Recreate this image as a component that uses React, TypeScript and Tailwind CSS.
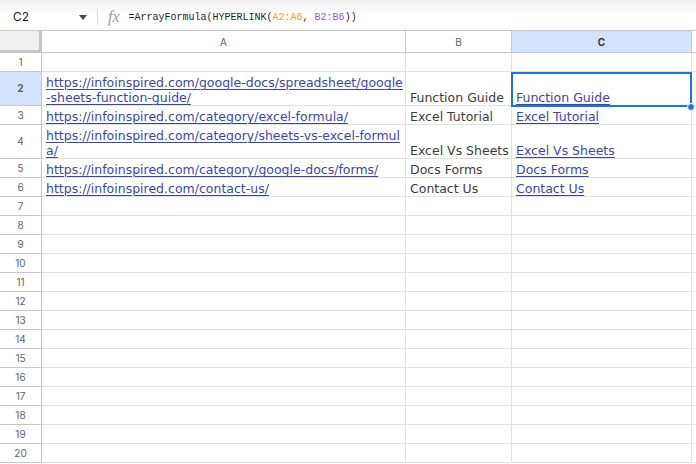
const COLS = ["A", "B", "C"]

const DATA: { url: string[]; label: string }[] = [
  { url: ["https://infoinspired.com/google-docs/spreadsheet/google", "-sheets-function-guide/"], label: "Function Guide" },
  { url: ["https://infoinspired.com/category/excel-formula/"], label: "Excel Tutorial" },
  { url: ["https://infoinspired.com/category/sheets-vs-excel-formul", "a/"], label: "Excel Vs Sheets" },
  { url: ["https://infoinspired.com/category/google-docs/forms/"], label: "Docs Forms" },
  { url: ["https://infoinspired.com/contact-us/"], label: "Contact Us" },
]

const cell = "border-r border-b border-[#e1e1e1] flex items-end px-[4px] leading-[15px] overflow-hidden whitespace-nowrap"
const link = "text-[#3d46a8] underline decoration-[1px] underline-offset-[2px]"
const rowHead = "border-r border-b border-[#c7c7c7] flex items-center justify-center text-[10px] text-[#5f6368]"

function RowHeader({ n, active }: { n: number; active?: boolean }) {
  return (
    <div className={`${rowHead} ${active ? "bg-[#d3e3fd] font-bold text-[#1f1f1f]" : "bg-white"}`} style={{ fontFamily: "Inter, Roboto, sans-serif" }}>
      {n}
    </div>
  )
}

export default function App() {
  return (
    <div className="w-[696px] h-[464px] overflow-hidden bg-white" style={{ fontFamily: '"DejaVu Sans", Verdana, sans-serif' }}>
      {/* Formula bar */}
      <div className="h-[31px] pt-[4px] flex items-center border-b border-[#c7c7c7] bg-gradient-to-b from-[#f0f0f0] via-white to-white">
        <div className="w-[72px] pl-[13px] text-[12px] text-[#1f1f1f]" style={{ fontFamily: "Inter, Roboto, sans-serif" }}>
          C2
        </div>
        <svg width="8" height="5" viewBox="0 0 8 5" className="ml-[7px]">
          <path d="M0 0h8L4 5z" fill="#444746" />
        </svg>
        <div className="ml-[10px] w-px h-[16px] bg-[#dadada]" />
        <span className="ml-[10px] text-[16px] italic text-[#9a9a9a]" style={{ fontFamily: '"Liberation Serif", serif' }}>
          fx
        </span>
        <div className="ml-[9px] text-[10px] text-[#1f1f1f] whitespace-nowrap" style={{ fontFamily: '"Liberation Mono", monospace' }}>
          =ArrayFormula(HYPERLINK(<span className="text-[#f09a2c]">A2:A6</span>, <span className="text-[#a259c9]">B2:B6</span>))
        </div>
      </div>

      {/* Grid */}
      <div className="relative grid grid-cols-[42px_364px_106px_180px_1fr] grid-rows-[22px_19px_34px_19px_34px_19px_19px_repeat(14,19px)] text-[12.5px] text-[#3c3c3c]">
        {/* corner */}
        <div className="bg-[#f1f1f1] border-r-[3px] border-b-[3px] border-[#c4c4c4]" />
        {COLS.map((c) => (
          <div
            key={c}
            className={`border-r border-b border-[#c7c7c7] flex items-center justify-center pt-[2px] text-[10px] ${c === "C" ? "bg-[#d3e3fd] text-[#1f1f1f] font-semibold" : "bg-white text-[#5f6368]"}`}
            style={{ fontFamily: "Inter, Roboto, sans-serif" }}
          >
            {c}
          </div>
        ))}
        <div className="border-b border-[#c7c7c7]" />

        {/* row 1 */}
        <RowHeader n={1} />
        <div className={cell} />
        <div className={cell} />
        <div className={cell} />
        <div className={cell} />

        {DATA.map((r, i) => (
          <div key={i} className="contents">
            <RowHeader n={i + 2} active={i === 0} />
            <div className={`${cell} ${r.url.length > 1 ? "flex-col items-start justify-end" : ""}`}>
              {r.url.map((u) => (
                <span key={u} className={link}>{u}</span>
              ))}
            </div>
            <div className={cell}>{r.label}</div>
            <div className={cell}>
              <span className={link}>{r.label}</span>
            </div>
            <div className={cell} />
          </div>
        ))}

        {Array.from({ length: 14 }, (_, i) => (
          <div key={i} className="contents">
            <RowHeader n={i + 7} />
            <div className={cell} />
            <div className={cell} />
            <div className={cell} />
            <div className={cell} />
          </div>
        ))}

        {/* selection on C2 */}
        <div className="absolute left-[511px] top-[41px] w-[181px] h-[35px] border-2 border-[#1a73e8] pointer-events-none" />
        <div className="absolute left-[687px] top-[72px] w-[8px] h-[8px] rounded-full bg-[#1a73e8] border border-white" />
      </div>
    </div>
  )
}
